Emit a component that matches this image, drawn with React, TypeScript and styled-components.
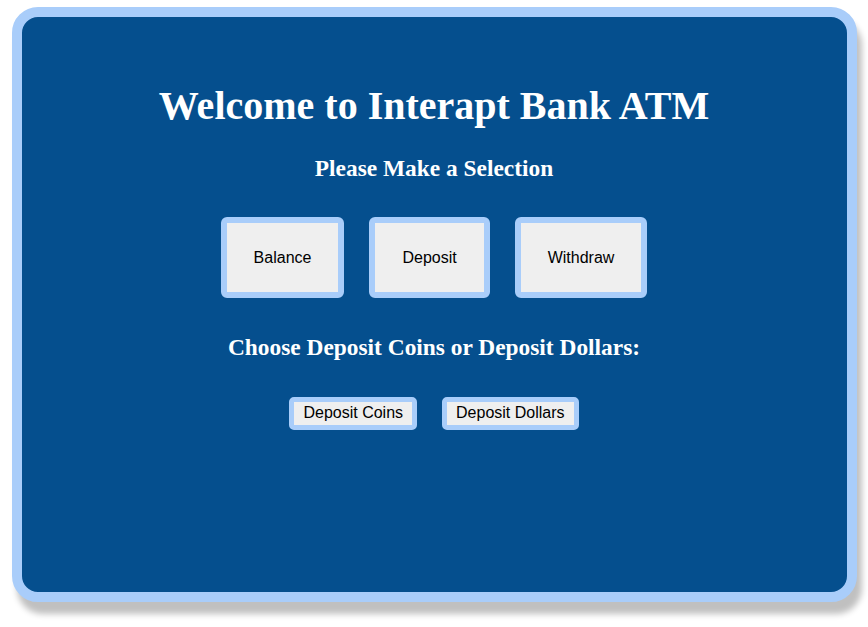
import styled, { createGlobalStyle } from "styled-components";

const GlobalStyle = createGlobalStyle`
  body {
    margin: 0;
    background: #ffffff;
    font-family: "Liberation Serif", "Times New Roman", serif;
  }
`

const Page = styled.div`
  padding: 7px 0 30px;
  display: flex;
  justify-content: center;
`

const Machine = styled.div`
  box-sizing: border-box;
  width: 845px;
  height: 595px;
  background: #054f8e;
  border: 10px solid #a9cdfa;
  border-radius: 26px;
  box-shadow: 5px 12px 6px #c0c0c0;
  display: flex;
  flex-direction: column;
  align-items: center;
  color: #ffffff;
`

const Title = styled.h1`
  font-size: 40px;
  font-weight: 700;
  line-height: 46px;
  margin: 66px 0 0;
`

const Subtitle = styled.h3<{ $top: number }>`
  font-size: 23.4px;
  font-weight: 700;
  line-height: 26px;
  margin: ${({ $top }) => `${$top}px 0 0`};
`

const ButtonRow = styled.div<{ $top: number }>`
  display: flex;
  flex-direction: row;
  gap: 25px;
  margin-top: ${({ $top }) => $top}px;
`

const MenuButton = styled.button`
  font-family: "Liberation Sans", Arial, sans-serif;
  font-size: 16px;
  line-height: 18px;
  color: #000000;
  background: #efefef;
  border: 6px solid #a9cdfa;
  border-radius: 6px;
  padding: 26px 27px 25px;
  cursor: pointer;
`

const DepositButton = styled.button`
  font-family: "Liberation Sans", Arial, sans-serif;
  font-size: 16px;
  line-height: 18px;
  color: #000000;
  background: #efefef;
  border: 5px solid #a9cdfa;
  border-radius: 5px;
  padding: 2px 9px 3px;
  cursor: pointer;
`

export default function App() {
  return (
    <>
      <GlobalStyle />
      <Page>
        <Machine>
          <Title>Welcome to Interapt Bank ATM</Title>
          <Subtitle $top={26}>Please Make a Selection</Subtitle>
          <ButtonRow $top={36}>
            <MenuButton>Balance</MenuButton>
            <MenuButton>Deposit</MenuButton>
            <MenuButton>Withdraw</MenuButton>
          </ButtonRow>
          <Subtitle $top={36}>Choose Deposit Coins or Deposit Dollars:</Subtitle>
          <ButtonRow $top={37}>
            <DepositButton>Deposit Coins</DepositButton>
            <DepositButton>Deposit Dollars</DepositButton>
          </ButtonRow>
        </Machine>
      </Page>
    </>
  );
}
